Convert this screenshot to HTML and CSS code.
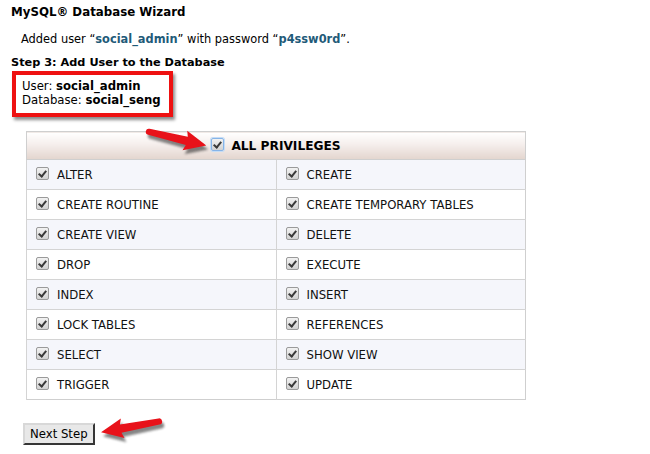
FILE: index.html
```html
<!DOCTYPE html>
<html>

<head>
  <title>MySQL Database Wizard</title>
  <link rel="stylesheet" href="styles.css">
</head>

<body>

  <div class="wizard">
    <h1>MySQL® Database Wizard</h1>
    <p class="notice">Added user “<b>social_admin</b>” with password “<b>p4ssw0rd</b>”.</p>

    <h2>Step 3: Add User to the Database</h2>
    <div class="userbox">
      User: <b>social_admin</b><br />
      Database: <b>social_seng</b>
    </div>

    <table class="privs">
      <tr>
        <th colspan="2"><span class="cb cb-focus"></span>ALL PRIVILEGES</th>
      </tr>
      <tr>
        <td><span class="cb"></span>ALTER</td>
        <td><span class="cb"></span>CREATE</td>
      </tr>
      <tr>
        <td><span class="cb"></span>CREATE ROUTINE</td>
        <td><span class="cb"></span>CREATE TEMPORARY TABLES</td>
      </tr>
      <tr>
        <td><span class="cb"></span>CREATE VIEW</td>
        <td><span class="cb"></span>DELETE</td>
      </tr>
      <tr>
        <td><span class="cb"></span>DROP</td>
        <td><span class="cb"></span>EXECUTE</td>
      </tr>
      <tr>
        <td><span class="cb"></span>INDEX</td>
        <td><span class="cb"></span>INSERT</td>
      </tr>
      <tr>
        <td><span class="cb"></span>LOCK TABLES</td>
        <td><span class="cb"></span>REFERENCES</td>
      </tr>
      <tr>
        <td><span class="cb"></span>SELECT</td>
        <td><span class="cb"></span>SHOW VIEW</td>
      </tr>
      <tr>
        <td><span class="cb"></span>TRIGGER</td>
        <td><span class="cb"></span>UPDATE</td>
      </tr>
    </table>

    <button class="next">Next Step</button>
  </div>

  <!-- annotation arrows -->
  <svg class="arrow arrow-top" width="80" height="40" viewBox="0 0 80 40">
    <defs>
      <filter id="soft" x="-20%" y="-40%" width="140%" height="180%">
        <feGaussianBlur stdDeviation="1.2" />
      </filter>
      <path id="arr" d="M3 -3 L42 -4.2 L40 -10 L62 0 L40 10 L42 4.2 L3 3.2 A3.1 3.1 0 0 1 3 -3 Z" />
    </defs>
    <g transform="translate(8 17) rotate(13.6)">
      <use href="#arr" fill="#222" opacity="0.55" filter="url(#soft)" />
    </g>
    <g transform="translate(6 13) rotate(13.6)">
      <use href="#arr" fill="#e8121a" />
    </g>
  </svg>
  <svg class="arrow arrow-btn" width="75" height="40" viewBox="0 0 75 40">
    <g transform="translate(66 17) rotate(169.5)">
      <use href="#arr" fill="#222" opacity="0.55" filter="url(#soft)" />
    </g>
    <g transform="translate(64 13) rotate(169.5)">
      <use href="#arr" fill="#e8121a" />
    </g>
  </svg>

</body>

</html>
```

FILE: styles.css
```css
body { margin: 0; font-family: Verdana, "DejaVu Sans", sans-serif; font-size: 11.7px; color: #000; background: #fff; }

.wizard { padding: 4px 0 0 11px; }

h1 { font-size: 11.8px; margin: 0; line-height: 16px; }
.notice { margin: 12px 0 0 10px; font-size: 11.4px; line-height: 14px; }
.notice b { color: #1f5b79; }
h2 { font-size: 11.3px; margin: 10px 0 0 0; line-height: 14px; }

.userbox {
  display: inline-block;
  margin-top: 1px;
  margin-left: 1px;
  padding: 5px 8px 6px 6px;
  border: 4px solid #ee1111;
  line-height: 13.5px;
  box-shadow: 2px 3px 3px rgba(0, 0, 0, 0.45);
}

.privs {
  border-collapse: collapse;
  width: 500px;
  margin: 14px 0 0 15px;
  border: 1px solid #cfcfcf;
}
.privs th {
  height: 27px;
  padding: 0;
  text-align: center;
  font-size: 12.2px;
  background: linear-gradient(#ffffff, #f6f0ee 40%, #e3d5ce);
  border-bottom: 1px solid #cfcfcf;
}
.privs td {
  width: 50%;
  height: 29px;
  padding: 0 0 0 9px;
  border-top: 1px solid #d4d4d4;
  border-left: 1px solid #d4d4d4;
  color: #111;
}
.privs tr:nth-child(even) td { background: #f5f6fb; }

.cb {
  display: inline-block;
  position: relative;
  width: 11px;
  height: 11px;
  margin-right: 8px;
  vertical-align: -1px;
  border: 1px solid #9a9a9a;
  border-radius: 2px;
  background: linear-gradient(#f2f2f2, #d2d2d2);
}
.cb::after {
  content: "";
  position: absolute;
  left: 3px;
  top: 1px;
  width: 3px;
  height: 6px;
  border: solid #3a3a3a;
  border-width: 0 2px 2px 0;
  transform: rotate(40deg);
}
.cb-focus { border-color: #86b4e8; box-shadow: 0 0 0 1px #c5dcf5; margin-right: 7px; }

.next {
  margin: 23px 0 0 12px;
  height: 22px;
  padding: 0 5px;
  font-family: Verdana, "DejaVu Sans", sans-serif;
  font-size: 11.7px;
  color: #000;
  background: #e8e8e8;
  border: 2px outset #d8d8d8;
  border-right-color: #8a8a8a;
  border-bottom-color: #8a8a8a;
}

.arrow { position: absolute; }
.arrow-top { left: 140px; top: 118px; }
.arrow-btn { left: 98px; top: 408px; }
```
